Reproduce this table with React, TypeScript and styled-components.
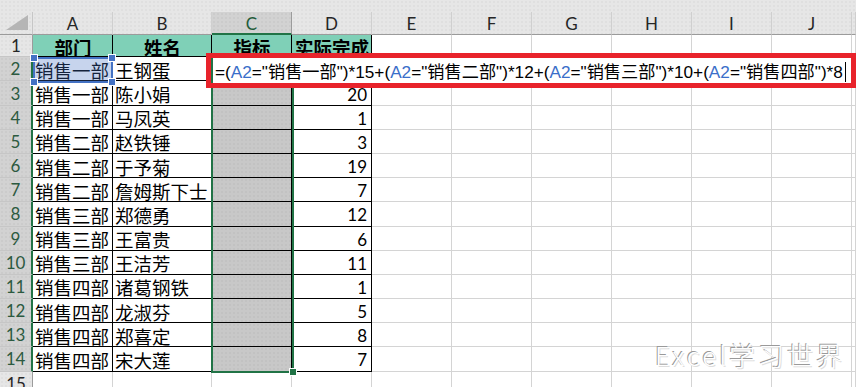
import React from 'react'
import styled, { createGlobalStyle } from 'styled-components'

const GlobalStyle = createGlobalStyle`
  html, body {
    margin: 0;
    padding: 0;
    background: #fff;
    overflow: hidden;
  }
`;

const GREEN = '#217346';
const HEAD_BG = '#e6e6e6';
const SEL_BG = '#d2d2d2';
const GRID = '#d4d4d4';
const CJK = '"Noto Sans CJK SC", "Noto Sans", sans-serif';
const LATIN = 'Lato, "Liberation Sans", sans-serif';

const dots = `
  background-image: radial-gradient(rgba(0,0,0,0.07) 0.6px, transparent 0.8px);
  background-size: 4px 4px;
`;

const Sheet = styled.div`
  position: relative;
  width: 856px;
  height: 387px;
  overflow: hidden;
  display: grid;
  grid-template-columns: 33px 80px 99px 80px 80px repeat(6, 80px) 1fr;
  grid-template-rows: 12px 23px 22.3px repeat(13, 24.18px) 24px;
`;

const TopBand = styled.div`
  grid-column: 1 / -1;
  background-color: ${HEAD_BG};
  ${dots}
`;

const Corner = styled.div`
  position: relative;
  background-color: ${HEAD_BG};
  border-right: 1px solid #c6c6c6;
  border-bottom: 1px solid #9b9b9b;
  ${dots}
`;

const CornerMark = styled.div`
  position: absolute;
  right: 4px;
  bottom: 4px;
  width: 0;
  height: 0;
  border-left: 22px solid transparent;
  border-bottom: 15px solid #b5b5b5;
`;

const ColHead = styled.div<{ $sel?: boolean }>`
  display: flex;
  align-items: center;
  justify-content: center;
  padding-top: 2px;
  background-color: ${p => (p.$sel ? SEL_BG : HEAD_BG)};
  border-right: 1px solid ${p => (p.$sel ? '#9b9b9b' : '#cfcfcf')};
  border-bottom: ${p => (p.$sel ? `2px solid ${GREEN}` : '1px solid #9b9b9b')};
  color: ${p => (p.$sel ? '#1f5c3a' : '#262626')};
  font-family: ${LATIN};
  font-size: 17px;
  line-height: 18px;
  ${dots}
`;

const RowHead = styled.div<{ $sel?: boolean }>`
  display: flex;
  align-items: center;
  justify-content: center;
  padding-top: 1px;
  background-color: ${p => (p.$sel ? SEL_BG : HEAD_BG)};
  border-right: ${p => (p.$sel ? `2px solid ${GREEN}` : '1px solid #9b9b9b')};
  border-bottom: 1px solid #c6c6c6;
  color: ${p => (p.$sel ? '#2c5a40' : '#262626')};
  font-family: ${LATIN};
  font-size: 17px;
  line-height: 18px;
  ${dots}
`;

type Align = 'left' | 'center' | 'right';

const Cell = styled.div<{ $tbl?: boolean; $fill?: string; $align?: Align; $bold?: boolean; $num?: boolean }>`
  display: flex;
  align-items: center;
  justify-content: ${p => (p.$align === 'right' ? 'flex-end' : p.$align === 'center' ? 'center' : 'flex-start')};
  padding: ${p => (p.$num ? '3px 4px 0 2px' : '2px 1px 0 2px')};
  min-width: 0;
  white-space: nowrap;
  border-right: 1px solid ${p => (p.$tbl ? '#000' : GRID)};
  border-bottom: 1px solid ${p => (p.$tbl ? '#000' : GRID)};
  background-color: ${p => p.$fill || '#fff'};
  ${p => (p.$fill === '#c8c8c8' ? dots : '')}
  color: #000;
  font-family: ${p => (p.$num ? LATIN : CJK)};
  font-size: ${p => (p.$num ? '17px' : '18.5px')};
  font-weight: ${p => (p.$bold ? 700 : 400)};
  line-height: 18px;
`;

const Selection = styled.div`
  position: absolute;
  left: 211px;
  top: 57px;
  width: 83px;
  height: 316px;
  box-sizing: border-box;
  border: 2px solid ${GREEN};
  pointer-events: none;
`;

const FillHandle = styled.div`
  position: absolute;
  right: -5px;
  bottom: -5px;
  width: 6px;
  height: 6px;
  background: ${GREEN};
  border: 1px solid #fff;
`;

const RefBox = styled.div`
  position: absolute;
  left: 33px;
  top: 57px;
  width: 80px;
  height: 26px;
  box-sizing: border-box;
  border: 2px solid #4472c4;
  background: rgba(68, 114, 196, 0.3);
  pointer-events: none;
`;

const Handle = styled.div<{ $x: 'l' | 'r'; $y: 't' | 'b' }>`
  position: absolute;
  width: 6px;
  height: 6px;
  background: #4472c4;
  border: 1px solid #fff;
  ${p => (p.$x === 'l' ? 'left: -5px;' : 'right: -5px;')}
  ${p => (p.$y === 't' ? 'top: -5px;' : 'bottom: -5px;')}
`;

const FormulaBox = styled.div`
  position: absolute;
  left: 206px;
  top: 53px;
  width: 650px;
  height: 35px;
  box-sizing: border-box;
  border: 5px solid #e8232b;
  background: #fff;
  display: flex;
  align-items: stretch;
`;

const FormulaText = styled.div`
  display: flex;
  align-items: center;
  padding: 2px 0 0 2px;
  border-left: 2px solid ${GREEN};
  font-family: "Liberation Sans", ${CJK};
  font-size: 17.2px;
  line-height: 20px;
  color: #000;
  white-space: nowrap;
`;

const Ref = styled.span`
  color: #3a6ec9;
`;

const Caret = styled.span`
  display: inline-block;
  width: 1px;
  height: 20px;
  margin-left: 2px;
  background: #000;
`;

const Watermark = styled.div`
  position: absolute;
  left: 655px;
  top: 340px;
  font-family: ${CJK};
  font-size: 26px;
  font-weight: 300;
  line-height: 30px;
  color: #fff;
  letter-spacing: 3px;
  text-shadow: -1px -1px 0 #9a9a9a, 1px 1px 0 #dedede;
  pointer-events: none;
`;

const COLS = ['A', 'B', 'C', 'D', 'E', 'F', 'G', 'H', 'I', 'J', 'K'];

const HEADER = ['部门', '姓名', '指标', '实际完成'];

const DATA: [string, string, string][] = [
  ['销售一部', '王钢蛋', ''],
  ['销售一部', '陈小娟', '20'],
  ['销售一部', '马凤英', '1'],
  ['销售二部', '赵铁锤', '3'],
  ['销售二部', '于予菊', '19'],
  ['销售二部', '詹姆斯下士', '7'],
  ['销售三部', '郑德勇', '12'],
  ['销售三部', '王富贵', '6'],
  ['销售三部', '王洁芳', '11'],
  ['销售四部', '诸葛钢铁', '1'],
  ['销售四部', '龙淑芬', '5'],
  ['销售四部', '郑喜定', '8'],
  ['销售四部', '宋大莲', '7'],
];

const PARTS: [string, string][] = [
  ['销售一部', '15'],
  ['销售二部', '12'],
  ['销售三部', '10'],
  ['销售四部', '8'],
];

function renderRow(r: number) {
  const cells: React.ReactNode[] = [];
  const inTable = r >= 1 && r <= 14;
  cells.push(
    <RowHead key={`h${r}`} $sel={r >= 2 && r <= 14}>
      {r}
    </RowHead>
  );
  COLS.forEach((c, i) => {
    const key = `${c}${r}`;
    if (i > 3 || !inTable) {
      cells.push(<Cell key={key} />);
      return;
    }
    if (r === 1) {
      cells.push(
        <Cell key={key} $tbl $fill="#7fd0b7" $align="center" $bold>
          {HEADER[i]}
        </Cell>
      );
      return;
    }
    const row = DATA[r - 2];
    if (i === 2) {
      cells.push(<Cell key={key} $tbl $fill="#c8c8c8" />);
    } else if (i === 3) {
      cells.push(
        <Cell key={key} $tbl $num $align="right">
          {row[2]}
        </Cell>
      );
    } else {
      cells.push(
        <Cell key={key} $tbl>
          {row[i]}
        </Cell>
      );
    }
  });
  return cells;
}

export default function App() {
  return (
    <>
      <GlobalStyle />
      <Sheet>
        <TopBand />
        <Corner>
          <CornerMark />
        </Corner>
        {COLS.map(c => (
          <ColHead key={c} $sel={c === 'C'}>
            {c === 'K' ? '' : c}
          </ColHead>
        ))}
        {Array.from({ length: 15 }, (_, k) => renderRow(k + 1))}

        <RefBox>
          <Handle $x="l" $y="t" />
          <Handle $x="r" $y="t" />
          <Handle $x="l" $y="b" />
          <Handle $x="r" $y="b" />
        </RefBox>
        <Selection>
          <FillHandle />
        </Selection>
        <FormulaBox>
          <FormulaText>
            =
            {PARTS.map(([dept, n], i) => (
              <React.Fragment key={dept}>
                (<Ref>A2</Ref>="{dept}")*{n}
                {i < PARTS.length - 1 ? '+' : ''}
              </React.Fragment>
            ))}
            <Caret />
          </FormulaText>
        </FormulaBox>
        <Watermark>Excel学习世界</Watermark>
      </Sheet>
    </>
  )
}
